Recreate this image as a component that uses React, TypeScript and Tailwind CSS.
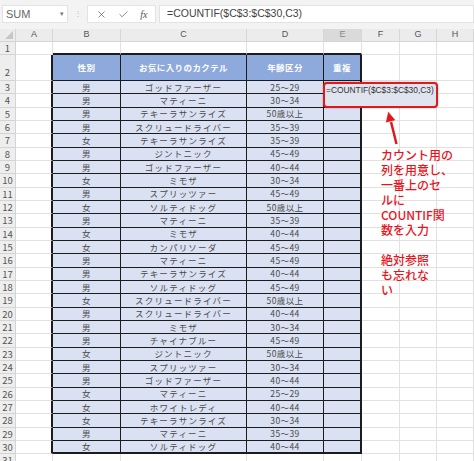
import React from 'react';
import { X, Check } from 'lucide-react';

type Row = [string, string, string];

const data: Row[] = [
  ['男', 'ゴッドファーザー', '25～29'],
  ['男', 'マティーニ', '30～34'],
  ['男', 'テキーラサンライズ', '50歳以上'],
  ['男', 'スクリュードライバー', '35～39'],
  ['女', 'テキーラサンライズ', '35～39'],
  ['男', 'ジントニック', '45～49'],
  ['男', 'ゴッドファーザー', '40～44'],
  ['女', 'ミモザ', '30～34'],
  ['男', 'スプリッツァー', '45～49'],
  ['女', 'ソルティドッグ', '50歳以上'],
  ['男', 'マティーニ', '35～39'],
  ['女', 'ミモザ', '40～44'],
  ['女', 'カンパリソーダ', '45～49'],
  ['男', 'マティーニ', '45～49'],
  ['男', 'テキーラサンライズ', '40～44'],
  ['男', 'ソルティドッグ', '45～49'],
  ['女', 'スクリュードライバー', '50歳以上'],
  ['男', 'スクリュードライバー', '40～44'],
  ['男', 'ミモザ', '30～34'],
  ['男', 'チャイナブルー', '45～49'],
  ['女', 'ジントニック', '50歳以上'],
  ['男', 'スプリッツァー', '30～34'],
  ['男', 'ゴッドファーザー', '40～44'],
  ['女', 'マティーニ', '25～29'],
  ['女', 'ホワイトレディ', '40～44'],
  ['女', 'テキーラサンライズ', '30～34'],
  ['男', 'マティーニ', '35～39'],
  ['女', 'ソルティドッグ', '40～44'],
];

const jp = "font-['Noto_Sans_CJK_JP',sans-serif]";
const grid = 'border-r border-b border-[#e1e1e1]';
const cellBody = 'bg-[#d9e1f2] border-r border-b border-[#1c1c1c] flex items-center justify-center text-[8.5px] text-[#4a4a4a] tracking-[0.4px]';

const RowNum: React.FC<{ n: number; tall?: boolean }> = ({ n, tall }) => (
  <div className={`w-[16px] shrink-0 bg-[#eeeeee] border-r border-b border-[#d4d4d4] flex justify-center text-[9.5px] text-[#555] ${tall ? 'items-end pb-[1px]' : 'items-center'}`}>
    {n}
  </div>
);

// plain empty cells for F, G, H
const Tail: React.FC = () => (
  <>
    <div className={`w-[38px] shrink-0 ${grid}`} />
    <div className={`w-[37px] shrink-0 ${grid}`} />
    <div className={`w-[37px] shrink-0 ${grid}`} />
  </>
);

export default function App() {
  return (
    <div className={`relative w-[474px] h-[461px] overflow-hidden bg-white ${jp}`}>
      {/* formula bar */}
      <div className="h-[29px] bg-[#f3f3f3] flex items-start pt-[5px] pl-[2px] font-['Liberation_Sans',sans-serif]">
        <div className="w-[66px] h-[18px] bg-white border border-[#e3e3e3] flex items-center justify-between px-[3px]">
          <span className="text-[11px] text-[#666]">SUM</span>
          <span className="text-[7px] text-[#777]">▾</span>
        </div>
        <div className="w-[19px] h-[18px] flex items-center justify-center text-[8px] text-[#bbb]">⋮</div>
        <div className="w-[69px] h-[18px] bg-white border border-[#e3e3e3] flex items-center justify-around px-[2px] text-[#555]">
          <X size={11} strokeWidth={1.5} />
          <Check size={11} strokeWidth={1.5} />
          <span className="font-['Liberation_Serif',serif] italic text-[10px]">fx</span>
        </div>
        <div className="ml-[3px] flex-1 h-[18px] bg-white border border-[#e3e3e3] flex items-center pl-[7px] text-[10.5px] text-[#444]">
          =COUNTIF($C$3:$C$30,C3)
        </div>
      </div>

      {/* column headers */}
      <div className="flex h-[13px] bg-[#ececec] text-[9px] text-[#555] font-['Liberation_Sans',sans-serif]">
        <div className="w-[16px] shrink-0 border-r border-b border-[#d4d4d4] relative">
          <div className="absolute right-[2px] bottom-[2px] w-0 h-0 border-l-[8px] border-l-transparent border-b-[8px] border-b-[#c6c6c6]" />
        </div>
        {[
          ['A', 'w-[37px]'],
          ['B', 'w-[68px]'],
          ['C', 'w-[126px]'],
          ['D', 'w-[77px]'],
          ['E', 'w-[38px] bg-[#dadada] text-[#888]'],
          ['F', 'w-[38px]'],
          ['G', 'w-[37px]'],
          ['H', 'w-[37px]'],
        ].map(([l, c]) => (
          <div key={l} className={`${c} shrink-0 border-r border-b border-[#d6d6d6] flex items-center justify-center`}>
            {l}
          </div>
        ))}
      </div>

      {/* row 1 */}
      <div className="flex h-[13px]">
        <RowNum n={1} />
        <div className={`w-[37px] shrink-0 ${grid}`} />
        <div className="w-[68px] shrink-0 border-r border-[#e1e1e1] border-b-2 border-b-[#1c1c1c]" />
        <div className="w-[126px] shrink-0 border-r border-[#e1e1e1] border-b-2 border-b-[#1c1c1c]" />
        <div className="w-[77px] shrink-0 border-r border-[#e1e1e1] border-b-2 border-b-[#1c1c1c]" />
        <div className="w-[38px] shrink-0 border-r border-[#e1e1e1] border-b-2 border-b-[#1c1c1c]" />
        <Tail />
      </div>

      {/* row 2: table header */}
      <div className="flex h-[26px]">
        <RowNum n={2} tall />
        <div className="w-[37px] shrink-0 border-b border-[#e1e1e1] border-r-2 border-r-[#1c1c1c]" />
        {[
          ['性別', 'w-[68px]'],
          ['お気に入りのカクテル', 'w-[126px]'],
          ['年齢区分', 'w-[77px]'],
          ['重複', 'w-[38px] border-r-2'],
        ].map(([t, c]) => (
          <div
            key={t}
            className={`${c} shrink-0 bg-[#8ea9db] border-r border-b border-[#1c1c1c] flex items-center justify-center text-[8.5px] font-bold text-white tracking-[0.4px]`}
          >
            {t}
          </div>
        ))}
        <Tail />
      </div>

      {/* data rows */}
      {data.map(([sex, drink, age], i) => {
        const last = i === data.length - 1;
        const bb = last ? 'border-b-2' : '';
        return (
          <div key={i} className="flex h-[13.33px]">
            <RowNum n={i + 3} />
            <div className="w-[37px] shrink-0 border-b border-[#e1e1e1] border-r-2 border-r-[#1c1c1c]" />
            <div className={`w-[68px] shrink-0 ${cellBody} ${bb}`}>{sex}</div>
            <div className={`w-[126px] shrink-0 ${cellBody} ${bb} tracking-[1.2px]`}>{drink}</div>
            <div className={`w-[77px] shrink-0 ${cellBody} ${bb}`}>{age}</div>
            <div className={`w-[38px] shrink-0 ${cellBody} ${bb} border-r-2`} />
            <Tail />
          </div>
        );
      })}

      {/* row 31 */}
      <div className="flex h-[13px]">
        <RowNum n={31} />
        <div className={`w-[37px] shrink-0 ${grid}`} />
        <div className={`w-[68px] shrink-0 ${grid}`} />
        <div className={`w-[126px] shrink-0 ${grid}`} />
        <div className={`w-[77px] shrink-0 ${grid}`} />
        <div className={`w-[38px] shrink-0 ${grid}`} />
        <Tail />
      </div>

      {/* red callout box over E3 with overflowing formula */}
      <div className="absolute left-[323px] top-[82px] w-[115px] h-[26px] rounded-[4px] border-2 border-[#e0191e] bg-[#dfe4ef] shadow-[0_0_2px_rgba(0,0,0,0.35)] pl-[1px] pt-[1px]">
        <span className="block whitespace-nowrap text-[8.4px] leading-[11px] text-[#333] font-['Liberation_Sans',sans-serif]">
          =COUNTIF($C$3:$C$30,C3)
        </span>
      </div>

      {/* arrow */}
      <svg className="absolute left-[370px] top-[100px]" width="40" height="50" viewBox="370 100 40 50">
        <line x1="396.5" y1="144" x2="390.8" y2="121" stroke="white" strokeWidth="4.5" strokeOpacity="0.8" />
        <line x1="396.5" y1="144" x2="390.8" y2="121" stroke="#e0191e" strokeWidth="2.5" />
        <polygon points="388,111 396,120.5 385.3,123" fill="#e0191e" stroke="white" strokeWidth="1" strokeOpacity="0.8" />
      </svg>

      {/* annotation */}
      <div className="absolute left-[381px] top-[147px] text-[12px] leading-[15px] font-medium text-[#e8141c] whitespace-nowrap [text-shadow:0_0_1px_#fff,0_0_2px_#fff]">
        <div>カウント用の</div>
        <div>列を用意し、</div>
        <div>一番上のセ</div>
        <div>ルに</div>
        <div>COUNTIF関</div>
        <div>数を入力</div>
        <div>&nbsp;</div>
        <div>絶対参照</div>
        <div>も忘れな</div>
        <div>い</div>
      </div>
    </div>
  );
}
